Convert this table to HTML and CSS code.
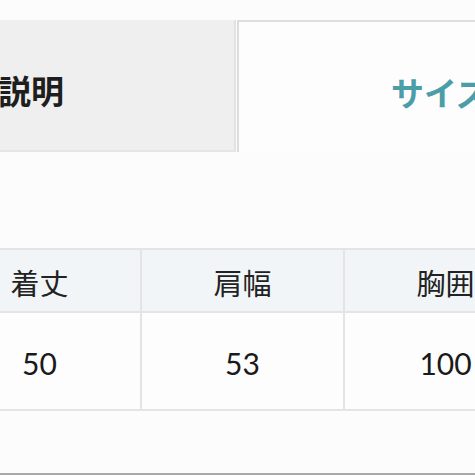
FILE: index.html
```html
<!DOCTYPE html>
<html lang="ja">
<head>
<meta charset="utf-8">
<link rel="stylesheet" href="styles.css">
</head>
<body>
<div class="page">
  <div class="tabs">
    <div class="tab tab-off"><span>商品説明</span></div>
    <div class="tab tab-on"><span>サイズ表</span></div>
  </div>
  <div class="table">
    <div class="cell head">着丈</div>
    <div class="cell head">肩幅</div>
    <div class="cell head">胸囲</div>
    <div class="cell data">50</div>
    <div class="cell data">53</div>
    <div class="cell data">100</div>
  </div>
</div>
</body>
</html>
```
FILE: styles.css
```css
html, body {
  margin: 0;
  padding: 0;
  background: #fcfcfc;
  overflow: hidden;
}
.page {
  width: 475px;
  height: 475px;
  box-sizing: border-box;
  border-bottom: 2px solid #a9a9a9;
  overflow: hidden;
  font-family: Lato, "Noto Sans CJK JP", sans-serif;
  color: #1e1e1e;
}
.tabs {
  display: flex;
  margin-top: 20px;
  margin-left: -120px;
  height: 132px;
}
.tab {
  flex: 0 0 auto;
  box-sizing: border-box;
  display: flex;
  align-items: center;
  font-family: "Noto Sans CJK JP", sans-serif;
  font-weight: 700;
  font-size: 33px;
  padding-top: 10px;
  white-space: nowrap;
}
.tab-off {
  width: 356px;
  background: #efefef;
  border-right: 2px solid #e2e2e2;
  border-bottom: 2px solid #e6e6e6;
  padding-left: 52px;
}
.tab-on {
  width: 400px;
  margin-left: 1px;
  background: #fdfdfd;
  border-top: 2px solid #dedede;
  border-left: 2px solid #dcdcdc;
  padding-left: 152px;
  color: #4b9ea8;
}
.table {
  display: grid;
  grid-template-columns: 203px 203px 203px;
  grid-template-rows: 63px 98px;
  margin-top: 96px;
  margin-left: -63px;
  width: max-content;
  border-top: 2px solid #e4e4e4;
  border-left: 2px solid #e4e4e4;
}
.cell {
  display: flex;
  align-items: center;
  justify-content: center;
  border-right: 2px solid #e4e4e4;
  border-bottom: 2px solid #e4e4e4;
}
.head {
  background: #f1f5f7;
  font-family: "Noto Sans CJK JP", sans-serif;
  font-size: 29px;
  color: #222;
  padding-top: 2px;
}
.data {
  background: #fdfdfd;
  font-size: 30px;
  color: #1a1a1a;
  padding-top: 3px;
}
```
